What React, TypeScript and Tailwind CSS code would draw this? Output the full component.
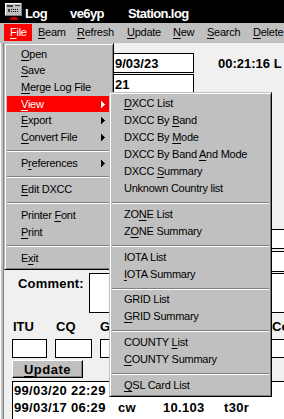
import React from "react";

type It = { t: string; u?: number; arrow?: boolean; active?: boolean } | "sep";

const U = ({ t, u }: { t: string; u?: number }) => {
  if (u === undefined || u < 0) return <>{t}</>;
  return (
    <>
      {t.slice(0, u)}
      <span className="underline decoration-1 underline-offset-[2px]">{t[u]}</span>
      {t.slice(u + 1)}
    </>
  );
};

const Arrow = ({ white }: { white?: boolean }) => (
  <svg width="4" height="7" viewBox="0 0 4 7" shapeRendering="crispEdges" className="mr-[6px]">
    <g fill={white ? "#ffffff" : "#000000"}>
      <rect x="0" y="0" width="1" height="7" />
      <rect x="1" y="1" width="1" height="5" />
      <rect x="2" y="2" width="1" height="3" />
      <rect x="3" y="3" width="1" height="1" />
    </g>
  </svg>
);

const fileItems: It[] = [
  { t: "Open", u: 0 },
  { t: "Save", u: 0 },
  { t: "Merge Log File", u: 0 },
  { t: "View", u: 0, arrow: true, active: true },
  { t: "Export", u: 0, arrow: true },
  { t: "Convert File", u: 0, arrow: true },
  "sep",
  { t: "Preferences", u: 1, arrow: true },
  "sep",
  { t: "Edit DXCC", u: 0 },
  "sep",
  { t: "Printer Font", u: 8 },
  { t: "Print", u: 0 },
  "sep",
  { t: "Exit", u: 1 },
];

const subItems: It[] = [
  { t: "DXCC List", u: 0 },
  { t: "DXCC By Band", u: 8 },
  { t: "DXCC By Mode", u: 8 },
  { t: "DXCC By Band And Mode", u: 13 },
  { t: "DXCC Summary", u: 5 },
  { t: "Unknown Country list" },
  "sep",
  { t: "ZONE List", u: 2 },
  { t: "ZONE Summary", u: 1 },
  "sep",
  { t: "IOTA List" },
  { t: "IOTA Summary", u: 0 },
  "sep",
  { t: "GRID List" },
  { t: "GRID Summary", u: 0 },
  "sep",
  { t: "COUNTY List", u: 7 },
  { t: "COUNTY Summary", u: 0 },
  "sep",
  { t: "QSL Card List", u: 0 },
];

const menuBox =
  "absolute bg-[#c0c0c0] border border-[#c0c0c0] border-r-black border-b-black shadow-[inset_1px_1px_0_#ffffff,inset_-1px_-1px_0_#808080] p-[2px] text-[11px] leading-[13px] tracking-[-0.25px] text-black";

const Menu = ({
  items,
  itemH,
  sepCls,
  pl,
}: {
  items: It[];
  itemH: string;
  sepCls: string;
  pl: string;
}) => (
  <div className="flex flex-col">
    {items.map((it, i) =>
      it === "sep" ? (
        <div key={i} className={sepCls}>
          <div className="h-px bg-[#808080]" />
          <div className="h-px bg-white" />
        </div>
      ) : (
        <div
          key={i}
          className={`flex items-center ${itemH} ${pl} whitespace-nowrap ${
            it.active ? "bg-[#ff0000] text-white" : ""
          }`}
        >
          <span className="flex-1">
            <U t={it.t} u={it.u} />
          </span>
          {it.arrow && <Arrow white={it.active} />}
        </div>
      )
    )}
  </div>
);

const bar = [
  { t: "File", w: "w-[28px]" },
  { t: "Beam", w: "w-[39px]" },
  { t: "Refresh", w: "w-[50px]" },
  { t: "Update", w: "w-[46px]" },
  { t: "New", w: "w-[34px]" },
  { t: "Search", w: "w-[46px]" },
  { t: "Delete", w: "w-[46px]" },
];

const Icon = () => (
  <svg width="18" height="19" viewBox="0 0 18 19" shapeRendering="crispEdges">
    <rect x="0" y="0" width="17" height="13" fill="#c0c0c0" />
    <rect x="0" y="0" width="17" height="1" fill="#ffffff" />
    <rect x="0" y="0" width="1" height="13" fill="#ffffff" />
    <rect x="0" y="12" width="17" height="1" fill="#808080" />
    <rect x="16" y="0" width="1" height="13" fill="#808080" />
    <rect x="2" y="2" width="6" height="2" fill="#404040" />
    <rect x="10" y="2" width="5" height="1" fill="#404040" />
    {[0, 1, 2, 3].map((c) =>
      [0, 1].map((r) => (
        <rect key={`${c}-${r}`} x={6 + c * 2} y={6 + r * 2} width="1" height="1" fill="#000" />
      ))
    )}
    <rect x="3" y="6" width="2" height="3" fill="#404040" />
    <path d="M5 17 A4 3.5 0 0 1 13 17 Z" fill="#c00000" />
  </svg>
);

const box = "border border-black bg-white";

export default function App() {
  return (
    <div className="relative w-[284px] h-[419px] overflow-hidden bg-[#f0f0f0] font-['Liberation_Sans',Arial,sans-serif] text-black">
      {/* Title bar */}
      <div className="flex h-[23px] bg-black text-white font-bold text-[13px] leading-[15px] tracking-[-0.6px] whitespace-nowrap">
        <div className="ml-[5px] mt-[3px] w-[20px]">
          <Icon />
        </div>
        <span className="mt-[6px] w-[45px]">Log</span>
        <span className="mt-[6px] w-[58px]">ve6yp</span>
        <span className="mt-[6px]">Station.log</span>
      </div>

      {/* Menu bar */}
      <div className="flex h-[20px] bg-[#c0c0c0] pl-[4px] text-[11px] leading-[13px] tracking-[-0.25px] whitespace-nowrap">
        {bar.map((b, i) => (
          <div
            key={b.t}
            className={`flex items-center h-[17px] mt-[1px] pl-[6px] shrink-0 ${b.w} ${
              i === 0 ? "bg-[#ff0000] text-white" : ""
            }`}
          >
            <U t={b.t} u={0} />
          </div>
        ))}
      </div>

      {/* Client area */}
      <div className="flex h-[376px]">
        <div className="w-[4px] shrink-0 bg-[#c0c0c0] border-l border-white border-r border-r-[#808080]" />
        <div className="flex-1 flex flex-col font-bold text-[13px] leading-[15px] whitespace-nowrap">
          <div className="h-[10px]" />
          <div className="flex items-center h-[20px]">
            <div className={`ml-[109px] w-[81px] h-[20px] ${box} flex items-center pl-[1px]`}>9/03/23</div>
            <span className="ml-[24px]">00:21:16 L</span>
          </div>
          <div className="flex h-[20px] mt-[1px]">
            <div className={`ml-[109px] w-[81px] h-[20px] ${box} flex items-center pl-[1px]`}>21</div>
          </div>
          <div className="h-[135px]" />
          <div className={`ml-[196px] h-[20px] ${box}`} />
          <div className={`ml-[196px] h-[21px] mt-[2px] ${box}`} />
          <div className="flex h-[40px] mt-[1px]">
            <span className="ml-[14px] w-[71px] mt-[3px] tracking-[0.2px]">Comment:</span>
            <div className={`flex-1 h-[40px] ${box} border-r-0`} />
          </div>
          <div className="flex mt-[6px]">
            <span className="ml-[9px] w-[43px]">ITU</span>
            <span className="w-[44px]">CQ</span>
            <span className="w-[172px]">G</span>
            <span>Co</span>
          </div>
          <div className="flex h-[19px] mt-[5px]">
            <div className={`ml-[8px] w-[35px] ${box}`} />
            <div className={`ml-[8px] w-[37px] ${box}`} />
            <div className={`ml-[8px] w-[60px] ${box}`} />
            <div className={`ml-[106px] flex-1 ${box} border-r-0`} />
          </div>
          <div className="flex mt-[2px]">
            <div className="ml-[8px] w-[71px] h-[18px] bg-[#c0c0c0] border border-white border-r-black border-b-black shadow-[inset_-1px_-1px_0_#808080] flex items-center justify-center tracking-[0.5px]">
              <U t="Update" u={0} />
            </div>
          </div>
          <div className="ml-[8px] mt-[3px] flex-1 bg-white border-t border-l border-black pl-[1px] leading-[17px] tracking-[0.3px]">
            <div className="flex">
              <span className="w-[104px]">99/03/20 22:29</span>
            </div>
            <div className="flex">
              <span className="w-[104px]">99/03/17 06:29</span>
              <span className="w-[45px]">cw</span>
              <span className="w-[61px]">10.103</span>
              <span>t30r</span>
            </div>
          </div>
        </div>
      </div>

      {/* File menu */}
      <div className={`${menuBox} left-[4px] top-[43px] w-[110px]`}>
        <Menu items={fileItems} itemH="h-[16.6px]" sepCls="h-[9.6px] pt-[4px]" pl="pl-[14px]" />
      </div>

      {/* View submenu */}
      <div className={`${menuBox} left-[109px] top-[92px] w-[163px]`}>
        <Menu items={subItems} itemH="h-[17px]" sepCls="h-[8.8px] pt-[5px]" pl="pl-[12px]" />
      </div>
    </div>
  );
}
